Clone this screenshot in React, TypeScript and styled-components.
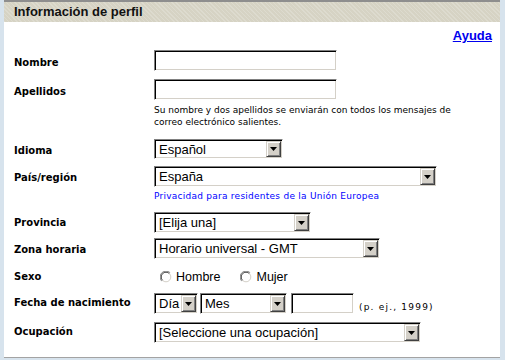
import React from "react";
import styled, { createGlobalStyle } from "styled-components";

const Global = createGlobalStyle`
  html, body { margin: 0; padding: 0; background: #ffffff; }
  body { width: 505px; height: 360px; overflow: hidden; }
`;

const Page = styled.div`
  width: 505px;
  height: 360px;
  box-sizing: border-box;
  padding: 0 5px 0 4px;
  background: #d7e3ed;
`;

const Panel = styled.div`
  height: 358px;
  box-sizing: border-box;
  background: #ffffff;
  border-top: 2px solid #8e8e8e;
  border-bottom: 1px solid #a3a3a3;
  display: flex;
  flex-direction: column;
`;

const Header = styled.div`
  height: 20px;
  line-height: 20px;
  padding-left: 10px;
  font-family: "Liberation Sans", Arial, sans-serif;
  font-weight: bold;
  font-size: 13px;
  color: #111;
  background-color: #d6d3c4;
  background-image: repeating-linear-gradient(
    45deg,
    rgba(255, 255, 255, 0.18) 0 1px,
    transparent 1px 3px
  );
`;

const Body = styled.div`
  padding: 0 8px 0 10px;
  display: flex;
  flex-direction: column;
`;

const HelpRow = styled.div`
  display: flex;
  justify-content: flex-end;
  margin-top: 6px;
  height: 16px;
`;

const HelpLink = styled.a`
  font-family: "Liberation Sans", Arial, sans-serif;
  font-weight: bold;
  font-size: 13px;
  line-height: 16px;
  color: #0000ee;
  text-decoration: underline;
  cursor: pointer;
`;

const FormRow = styled.div<{ $mt: number }>`
  display: grid;
  grid-template-columns: 140px 1fr;
  margin-top: ${(p) => p.$mt}px;
`;

const Label = styled.div<{ $pt: number }>`
  font-family: "DejaVu Sans", Verdana, sans-serif;
  font-weight: bold;
  font-size: 10px;
  line-height: 12px;
  padding-top: ${(p) => p.$pt}px;
  color: #000;
  white-space: nowrap;
`;

const Stack = styled.div`
  display: flex;
  flex-direction: column;
  align-items: flex-start;
`;

const Inline = styled.div<{ $gap?: number; $pl?: number; $h?: number }>`
  display: flex;
  align-items: center;
  gap: ${(p) => p.$gap ?? 0}px;
  padding-left: ${(p) => p.$pl ?? 0}px;
  ${(p) => (p.$h ? `height: ${p.$h}px;` : "")}
`;

const Sunken = styled.div<{ $w: number; $h?: number }>`
  width: ${(p) => p.$w}px;
  height: ${(p) => p.$h ?? 21}px;
  box-sizing: border-box;
  border-style: solid;
  border-width: 1px;
  border-color: #808080 #ffffff #ffffff #808080;
  box-shadow: inset 1px 1px 0 #000000, inset -1px -1px 0 #d4d0c8;
  background: #ffffff;
  padding: 1px;
  display: flex;
  align-items: stretch;
  flex-shrink: 0;
`;

const SelectText = styled.span`
  flex: 1;
  padding-left: 3px;
  font-family: "Liberation Sans", Arial, sans-serif;
  font-size: 13px;
  color: #000;
  display: flex;
  align-items: center;
  white-space: nowrap;
  overflow: hidden;
`;

const DropButton = styled.span`
  width: 15px;
  box-sizing: border-box;
  background: #d4d0c8;
  border-style: solid;
  border-width: 1px;
  border-color: #d4d0c8 #404040 #404040 #d4d0c8;
  box-shadow: inset 1px 1px 0 #ffffff, inset -1px -1px 0 #808080;
  display: flex;
  align-items: center;
  justify-content: center;
`;

const Note = styled.div<{ $mt: number; $color?: string; $ls?: number }>`
  margin-top: ${(p) => p.$mt}px;
  font-family: "DejaVu Sans", Verdana, sans-serif;
  font-size: 9px;
  line-height: 12px;
  letter-spacing: ${(p) => p.$ls ?? 0}px;
  color: ${(p) => p.$color ?? "#000"};
  white-space: nowrap;
`;

const Hint = styled.span`
  align-self: flex-end;
  margin-left: 5px;
  margin-bottom: 1px;
  font-family: "DejaVu Sans", Verdana, sans-serif;
  font-size: 9px;
  line-height: 12px;
  letter-spacing: 1.2px;
  color: #000;
  white-space: nowrap;
`;

const RadioItem = styled.label<{ $ml?: number }>`
  display: inline-flex;
  align-items: center;
  gap: 4px;
  margin-left: ${(p) => p.$ml ?? 0}px;
  font-family: "Liberation Sans", Arial, sans-serif;
  font-size: 12.5px;
  color: #000;
`;

const Arrow = () => (
  <svg width="7" height="4" viewBox="0 0 7 4">
    <path d="M0 0h7L3.5 4z" fill="#000" />
  </svg>
);

const RadioIcon = () => (
  <svg width="12" height="12" viewBox="0 0 12 12">
    <circle cx="6" cy="6" r="4.5" fill="#fff" />
    <path d="M10.2 1.8A5.5 5.5 0 0 0 1.8 10.2" fill="none" stroke="#808080" strokeWidth="1" />
    <path d="M9.4 2.6A4.5 4.5 0 0 0 2.6 9.4" fill="none" stroke="#404040" strokeWidth="1" />
    <path d="M1.8 10.2A5.5 5.5 0 0 0 10.2 1.8" fill="none" stroke="#ffffff" strokeWidth="1" />
    <path d="M2.6 9.4A4.5 4.5 0 0 0 9.4 2.6" fill="none" stroke="#d4d0c8" strokeWidth="1" />
  </svg>
);

const Select = ({ w, h, text }: { w: number; h?: number; text: string }) => (
  <Sunken $w={w} $h={h}>
    <SelectText>{text}</SelectText>
    <DropButton>
      <Arrow />
    </DropButton>
  </Sunken>
);

const TextInput = ({ w }: { w: number }) => <Sunken $w={w} />;

export default function App() {
  return (
    <>
      <Global />
      <Page>
        <Panel>
          <Header>Información de perfil</Header>
          <Body>
            <HelpRow>
              <HelpLink>Ayuda</HelpLink>
            </HelpRow>

            <FormRow $mt={6}>
              <Label $pt={7}>Nombre</Label>
              <Stack>
                <TextInput w={183} />
              </Stack>
            </FormRow>

            <FormRow $mt={8}>
              <Label $pt={7}>Apellidos</Label>
              <Stack>
                <TextInput w={183} />
                <Note $mt={4}>
                  Su nombre y dos apellidos se enviarán con todos los mensajes de
                  <br />
                  correo electrónico salientes.
                </Note>
              </Stack>
            </FormRow>

            <FormRow $mt={11}>
              <Label $pt={6}>Idioma</Label>
              <Stack>
                <Select w={129} h={20} text="Español" />
              </Stack>
            </FormRow>

            <FormRow $mt={7}>
              <Label $pt={6}>País/región</Label>
              <Stack>
                <Select w={283} text="España" />
                <Note $mt={3} $color="#0000ff" $ls={0.25}>
                  Privacidad para residentes de la Unión Europea
                </Note>
              </Stack>
            </FormRow>

            <FormRow $mt={10}>
              <Label $pt={5}>Provincia</Label>
              <Stack>
                <Select w={157} text="[Elija una]" />
              </Stack>
            </FormRow>

            <FormRow $mt={5}>
              <Label $pt={6}>Zona horaria</Label>
              <Stack>
                <Select w={226} text="Horario universal - GMT" />
              </Stack>
            </FormRow>

            <FormRow $mt={8}>
              <Label $pt={4}>Sexo</Label>
              <Inline $pl={6} $h={20}>
                <RadioItem>
                  <RadioIcon />
                  Hombre
                </RadioItem>
                <RadioItem $ml={20}>
                  <RadioIcon />
                  Mujer
                </RadioItem>
              </Inline>
            </FormRow>

            <FormRow $mt={6}>
              <Label $pt={4}>Fecha de nacimiento</Label>
              <Inline>
                <Select w={44} text="Día" />
                <Inline $pl={2}>
                  <Select w={87} text="Mes" />
                </Inline>
                <Inline $pl={4}>
                  <TextInput w={63} />
                </Inline>
                <Hint>(p. ej., 1999)</Hint>
              </Inline>
            </FormRow>

            <FormRow $mt={8}>
              <Label $pt={4}>Ocupación</Label>
              <Stack>
                <Select w={267} text="[Seleccione una ocupación]" />
              </Stack>
            </FormRow>
          </Body>
        </Panel>
      </Page>
    </>
  );
}
